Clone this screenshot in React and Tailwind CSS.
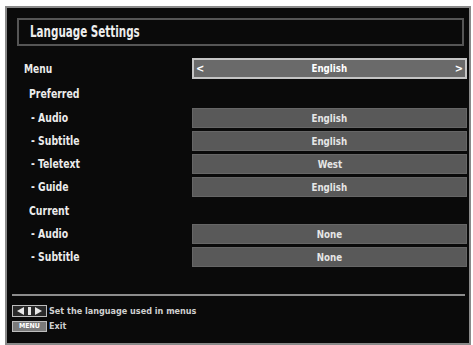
const font = { fontFamily: '"DejaVu Sans Condensed", "DejaVu Sans", sans-serif' };

const preferred = [
  { label: '- Audio', value: 'English' },
  { label: '- Subtitle', value: 'English' },
  { label: '- Teletext', value: 'West' },
  { label: '- Guide', value: 'English' },
];

const current = [
  { label: '- Audio', value: 'None' },
  { label: '- Subtitle', value: 'None' },
];

const ValueRow = ({ label, value, first }) => (
  <div className={`flex items-center h-[20px] ${first ? '' : 'mt-[3px]'}`}>
    <div className="w-[185px] pl-[24px] text-[12px] font-bold text-[#ececec] leading-none">
      <span className="inline-block origin-left scale-x-[0.86]">{label}</span>
    </div>
    <div className="w-[275px] h-full bg-[#595959] border border-[#666] flex items-center justify-center text-[11px] font-bold text-[#e6e6e6] leading-none">
      <span className="inline-block scale-x-[0.88]">{value}</span>
    </div>
  </div>
);

export default function App() {
  return (
    <div className="w-[473px] h-[345px] bg-white pl-[5px] pt-[6px] overflow-hidden" style={font}>
      <div className="w-[466px] h-[339px] border-2 border-[#8a8a8a] bg-[#0a0a0a] flex flex-col">
        {/* Title */}
        <div className="mt-[10px] ml-[10px] w-[447px] h-[28px] border-2 border-[#555] flex items-center pl-[11px]">
          <span className="inline-block origin-left scale-x-[0.72] text-[16px] font-bold text-[#ededed] leading-none">Language Settings</span>
        </div>

        {/* Menu row */}
        <div className="mt-[12px] flex items-center h-[21px]">
          <div className="w-[185px] pl-[17px] text-[12px] font-bold text-[#ececec] leading-none">
            <span className="inline-block origin-left scale-x-[0.84]">Menu</span>
          </div>
          <div className="w-[275px] h-full bg-[#6a6a6a] border-2 border-[#c4c4c4] flex items-center justify-between px-[2px] text-[11px] font-bold text-white leading-none">
            <span>&lt;</span>
            <span className="inline-block scale-x-[0.88]">English</span>
            <span>&gt;</span>
          </div>
        </div>

        <div className="h-[29px] flex items-center pl-[22px] text-[13px] font-bold text-[#ececec] leading-none">
          <span className="inline-block origin-left scale-x-[0.8]">Preferred</span>
        </div>
        {preferred.map((r, i) => (
          <ValueRow key={i} {...r} first={i === 0} />
        ))}

        <div className="h-[27px] flex items-center pl-[22px] text-[13px] font-bold text-[#ececec] leading-none">
          <span className="inline-block origin-left scale-x-[0.8]">Current</span>
        </div>
        {current.map((r, i) => (
          <ValueRow key={i} {...r} first={i === 0} />
        ))}

        {/* divider */}
        <div className="mt-[27px] ml-[5px] w-[453px] h-[2px] bg-[#8c8c8c]" />

        {/* footer */}
        <div className="mt-[9px] ml-[5px] flex flex-col gap-[4px]">
          <div className="flex items-center gap-[2px]">
            <div className="w-[35px] h-[12px] border border-[#bdbdbd] bg-[#2a2a2a] flex items-center justify-center gap-[3px]">
              <svg width="8" height="8" viewBox="0 0 8 8"><polygon points="7,0 7,8 0,4" fill="#e8e8e8" /></svg>
              <div className="w-[3px] h-[8px] bg-[#e8e8e8]" />
              <svg width="8" height="8" viewBox="0 0 8 8"><polygon points="1,0 1,8 8,4" fill="#e8e8e8" /></svg>
            </div>
            <span className="text-[9px] font-bold text-[#d0d0d0] leading-none">Set the language used in menus</span>
          </div>
          <div className="flex items-center gap-[2px]">
            <div className="w-[35px] h-[11px] border border-[#bdbdbd] bg-[#7a7a7a] flex items-center justify-center text-[7px] font-bold text-white leading-none">
              MENU
            </div>
            <span className="text-[9px] font-bold text-[#d0d0d0] leading-none">Exit</span>
          </div>
        </div>
      </div>
    </div>
  );
}
